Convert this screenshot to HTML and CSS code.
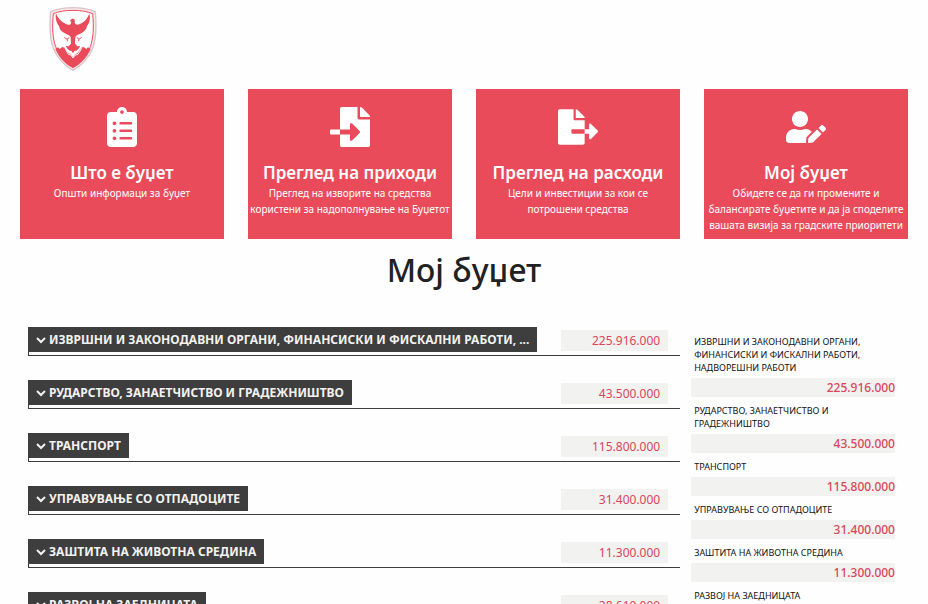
FILE: index.html
```html
<!DOCTYPE html>
<html lang="mk">
<head>
    <meta charset="UTF-8">
    <meta name="viewport" content="width=device-width, initial-scale=1.0">
    <title>Мој буџет</title>
    <link rel="stylesheet" href="styles.css">
</head>
<body>
    <header class="header">
        <a href="#" class="logo" aria-label="Почетна">
            <svg viewBox="0 0 144 192" width="48" height="64">
                <path d="M72 2C96 2 119 6 139 14C143 60 142 96 131 124C119 154 98 176 72 190C46 176 25 154 13 124C2 96 1 60 5 14C25 6 48 2 72 2Z" fill="#f6e9eb" stroke="#dcc3c8" stroke-width="4"/>
                <path d="M72 10C94 10 114 13 131 20C135 62 133 94 124 119C113 147 95 168 72 181C49 168 31 147 20 119C11 94 9 62 13 20C30 13 50 10 72 10Z" fill="#fff" stroke="#ea4b5b" stroke-width="3"/>
                <path d="M19 126L27 121L32 126L40 120L47 122L58 138L66 142L72 151L79 142L86 138L97 122L104 120L112 126L117 121L125 126C114 151 95 172 72 183C49 172 30 151 19 126Z" fill="#ea4b5b"/>
                <path d="M48 124L58 142L66 144L72 153L79 144L87 142L98 124" fill="none" stroke="#fff" stroke-width="3"/>
                <path d="M21 19C27 36 41 49 57 53C64 55 66 50 67 44L62 42L68 36C75 33 79 38 77 46C78 53 83 55 91 52C105 46 116 36 121 19C125 37 121 50 114 57C113 67 106 72 99 77C89 83 80 84 79 91L78 110L85 118L94 117L88 126L82 131H77L72 139L67 131H62L56 126L50 117L59 118L66 110L65 91C64 84 55 83 45 77C37 72 31 67 30 57C23 48 18 35 21 19Z" fill="#ea4b5b"/>
                <path d="M46 91L54 97L61 91M55 97V103M98 91L90 97L83 91M89 97V103" fill="none" stroke="#ea4b5b" stroke-width="3"/>
            </svg>
        </a>
    </header>

    <nav class="cards">
        <a href="#" class="card">
            <svg class="card-icon" viewBox="0 0 384 512"><path d="M336 64h-80c0-35.3-28.7-64-64-64s-64 28.7-64 64H48C21.5 64 0 85.5 0 112v352c0 26.5 21.5 48 48 48h288c26.5 0 48-21.5 48-48V112c0-26.5-21.5-48-48-48zM96 424c-13.3 0-24-10.7-24-24s10.7-24 24-24 24 10.7 24 24-10.7 24-24 24zm0-96c-13.3 0-24-10.7-24-24s10.7-24 24-24 24 10.7 24 24-10.7 24-24 24zm0-96c-13.3 0-24-10.7-24-24s10.7-24 24-24 24 10.7 24 24-10.7 24-24 24zm96-192c13.3 0 24 10.7 24 24s-10.7 24-24 24-24-10.7-24-24 10.7-24 24-24zm128 368c0 4.4-3.6 8-8 8H168c-4.4 0-8-3.6-8-8v-16c0-4.4 3.6-8 8-8h144c4.4 0 8 3.6 8 8v16zm0-96c0 4.4-3.6 8-8 8H168c-4.4 0-8-3.6-8-8v-16c0-4.4 3.6-8 8-8h144c4.4 0 8 3.6 8 8v16zm0-96c0 4.4-3.6 8-8 8H168c-4.4 0-8-3.6-8-8v-16c0-4.4 3.6-8 8-8h144c4.4 0 8 3.6 8 8v16z"/></svg>
            <h2>Што е буџет</h2>
            <p>Општи информаци за буџет</p>
        </a>
        <a href="#" class="card">
            <svg class="card-icon" viewBox="0 0 512 512"><path d="M16 288c-8.8 0-16 7.2-16 16v32c0 8.8 7.2 16 16 16h112v-64zm489-183L407.1 7c-4.5-4.5-10.6-7-17-7H384v128h128v-6.1c0-6.3-2.5-12.4-7-16.9zm-153 31V0H152c-13.3 0-24 10.7-24 24v264h128v-65.2c0-14.3 17.3-21.4 27.4-11.3L379 308c6.6 6.7 6.6 17.4 0 24l-95.7 96.4c-10.1 10.1-27.4 3-27.4-11.3V352H128v136c0 13.3 10.7 24 24 24h336c13.3 0 24-10.7 24-24V160H376c-13.2 0-24-10.8-24-24z"/></svg>
            <h2>Преглед на приходи</h2>
            <p>Преглед на изворите на средства користени за надополнување на Буџетот</p>
        </a>
        <a href="#" class="card">
            <svg class="card-icon" viewBox="0 0 576 512"><path d="M384 121.9c0-6.3-2.5-12.4-7-16.9L279.1 7c-4.5-4.5-10.6-7-17-7H256v128h128zM571 308l-95.7-96.4c-10.1-10.1-27.4-3-27.4 11.3V288h-64v64h64v65.2c0 14.3 17.3 21.4 27.4 11.3L571 332c6.6-6.6 6.6-17.4 0-24zm-379 28v-32c0-8.8 7.2-16 16-16h176V160H248c-13.2 0-24-10.8-24-24V0H24C10.7 0 0 10.7 0 24v464c0 13.3 10.7 24 24 24h336c13.3 0 24-10.7 24-24V352H208c-8.8 0-16-7.2-16-16z"/></svg>
            <h2>Преглед на расходи</h2>
            <p>Цели и инвестиции за кои се<br>потрошени средства</p>
        </a>
        <a href="#" class="card">
            <svg class="card-icon" viewBox="0 0 640 512"><path d="M224 256c70.7 0 128-57.3 128-128S294.7 0 224 0 96 57.3 96 128s57.3 128 128 128zm89.6 32h-16.7c-22.2 10.2-46.9 16-72.9 16s-50.6-5.8-72.9-16h-16.7C60.2 288 0 348.2 0 422.4V464c0 26.5 21.5 48 48 48h274.9c-2.4-6.8-3.4-14-2.6-21.3l6.8-60.9 1.2-11.1 7.9-7.9 77.3-77.3c-24.5-27.7-60-45.5-99.9-45.5zm45.3 145.3l-6.8 61c-1.1 10.2 7.5 18.8 17.6 17.6l60.9-6.8 137.9-137.9-71.7-71.7-137.9 137.8zM633 268.9L595.1 231c-9.3-9.3-24.5-9.3-33.8 0l-37.8 37.8-4.1 4.1 71.8 71.7 41.8-41.8c9.3-9.4 9.3-24.5 0-33.9z"/></svg>
            <h2>Мој буџет</h2>
            <p>Обидете се да ги промените и балансирате буџетите и да ја споделите вашата визија за градските приоритети</p>
        </a>
    </nav>

    <h1>Мој буџет</h1>

    <main class="budget">
        <div class="programs">
            <div class="program">
                <button type="button" class="program-name" id="p1"><svg class="chevron" viewBox="0 0 10 10"><path d="M1 3l4 4 4-4"/></svg>ИЗВРШНИ И ЗАКОНОДАВНИ ОРГАНИ, ФИНАНСИСКИ И ФИСКАЛНИ РАБОТИ, ...</button>
                <input type="text" class="program-value" value="225.916.000" aria-labelledby="p1">
            </div>
            <div class="program">
                <button type="button" class="program-name" id="p2"><svg class="chevron" viewBox="0 0 10 10"><path d="M1 3l4 4 4-4"/></svg>РУДАРСТВО, ЗАНАЕТЧИСТВО И ГРАДЕЖНИШТВО</button>
                <input type="text" class="program-value" value="43.500.000" aria-labelledby="p2">
            </div>
            <div class="program">
                <button type="button" class="program-name" id="p3"><svg class="chevron" viewBox="0 0 10 10"><path d="M1 3l4 4 4-4"/></svg>ТРАНСПОРТ</button>
                <input type="text" class="program-value" value="115.800.000" aria-labelledby="p3">
            </div>
            <div class="program">
                <button type="button" class="program-name" id="p4"><svg class="chevron" viewBox="0 0 10 10"><path d="M1 3l4 4 4-4"/></svg>УПРАВУВАЊЕ СО ОТПАДОЦИТЕ</button>
                <input type="text" class="program-value" value="31.400.000" aria-labelledby="p4">
            </div>
            <div class="program">
                <button type="button" class="program-name" id="p5"><svg class="chevron" viewBox="0 0 10 10"><path d="M1 3l4 4 4-4"/></svg>ЗАШТИТА НА ЖИВОТНА СРЕДИНА</button>
                <input type="text" class="program-value" value="11.300.000" aria-labelledby="p5">
            </div>
            <div class="program">
                <button type="button" class="program-name" id="p6"><svg class="chevron" viewBox="0 0 10 10"><path d="M1 3l4 4 4-4"/></svg>РАЗВОЈ НА ЗАЕДНИЦАТА</button>
                <input type="text" class="program-value" value="28.610.000" aria-labelledby="p6">
            </div>
        </div>

        <dl class="summary">
            <dt>ИЗВРШНИ И ЗАКОНОДАВНИ ОРГАНИ, ФИНАНСИСКИ И ФИСКАЛНИ РАБОТИ, НАДВОРЕШНИ РАБОТИ</dt>
            <dd>225.916.000</dd>
            <dt>РУДАРСТВО, ЗАНАЕТЧИСТВО И ГРАДЕЖНИШТВО</dt>
            <dd>43.500.000</dd>
            <dt>ТРАНСПОРТ</dt>
            <dd>115.800.000</dd>
            <dt>УПРАВУВАЊЕ СО ОТПАДОЦИТЕ</dt>
            <dd>31.400.000</dd>
            <dt>ЗАШТИТА НА ЖИВОТНА СРЕДИНА</dt>
            <dd>11.300.000</dd>
            <dt>РАЗВОЈ НА ЗАЕДНИЦАТА</dt>
            <dd>28.610.000</dd>
        </dl>
    </main>
</body>
</html>
```
FILE: styles.css
```css
* {
    margin: 0;
    padding: 0;
    box-sizing: border-box;
}

body {
    font-family: "Noto Sans", "Open Sans", sans-serif;
    background-color: #fefefe;
    color: #212121;
    overflow-x: hidden;
}

.header {
    padding: 7px 49px 18px;
}

.logo {
    display: block;
    width: 48px;
    height: 64px;
}

.cards {
    display: grid;
    grid-template-columns: repeat(4, 1fr);
    gap: 24px;
    padding: 0 20px;
}

.card {
    min-height: 150px;
    padding: 18px 0 6px;
    background-color: #ea4b5b;
    color: #fff;
    text-align: center;
    text-decoration: none;
}

.card:hover {
    background-color: #d94050;
}

.card-icon {
    display: block;
    width: 40px;
    height: 40px;
    margin: 0 auto 14px;
    fill: #fff;
}

.card h2 {
    font-size: 17px;
    line-height: 24px;
    font-weight: 600;
    white-space: nowrap;
}

.card p {
    font-size: 10px;
    line-height: 16px;
    font-weight: 400;
}

h1 {
    margin: 8px 0 34px;
    font-size: 32px;
    line-height: 46px;
    font-weight: 500;
    text-align: center;
}

.budget {
    display: grid;
    grid-template-columns: minmax(0, 16fr) minmax(0, 5fr);
    gap: 11px;
    padding: 0 33px 0 28px;
}

.program {
    display: flex;
    justify-content: space-between;
    align-items: flex-start;
    height: 29px;
    margin-bottom: 24px;
    padding-right: 12px;
    border-left: 1px solid #3e3e3e;
    border-bottom: 1px solid #3e3e3e;
}

.program-name {
    display: flex;
    align-items: center;
    gap: 3px;
    height: 25px;
    padding: 0 8px 0 7px;
    border: none;
    background-color: #3e3e3e;
    color: #f2f2f0;
    font-family: inherit;
    font-size: 12px;
    font-weight: 700;
    white-space: nowrap;
    cursor: pointer;
}

.chevron {
    width: 10px;
    height: 10px;
    fill: none;
    stroke: #f2f2f0;
    stroke-width: 2;
}

.program-value {
    width: 107px;
    height: 21px;
    margin-top: 3px;
    padding: 0 8px;
    border: none;
    background-color: #f2f2f1;
    color: #d9465a;
    font-family: inherit;
    font-size: 12px;
    text-align: right;
}

.summary {
    padding-top: 8px;
}

.summary dt {
    padding: 0 3px;
    color: #111;
    font-size: 9px;
    line-height: 13px;
}

.summary dd {
    height: 19px;
    margin: 4px 0 7px;
    background-color: #f2f2f1;
    color: #d9465a;
    font-size: 12px;
    line-height: 20px;
    font-weight: 500;
    text-align: right;
}
```
